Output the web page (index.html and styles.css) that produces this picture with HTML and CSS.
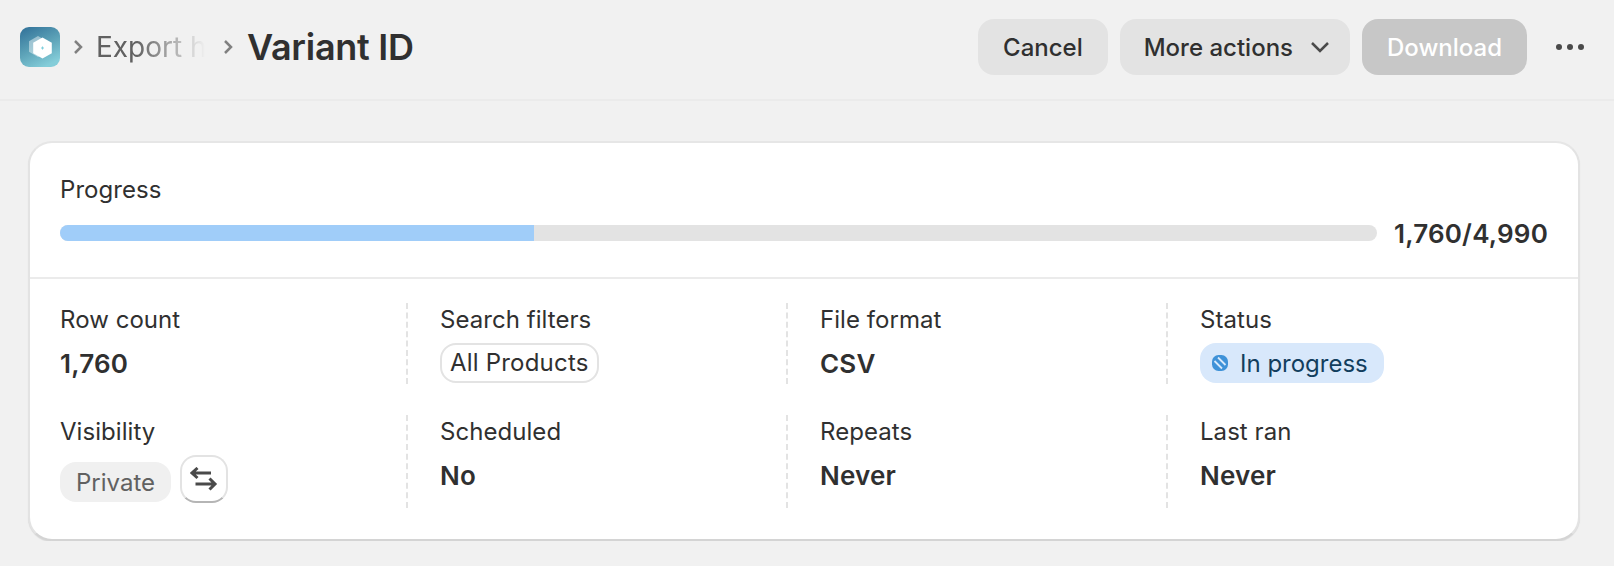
FILE: index.html
```html
<!DOCTYPE html>
<html lang="en">

<head>
    <meta charset="UTF-8">
    <title>Variant ID</title>
    <link rel="stylesheet" href="styles.css">
</head>

<body>
    <header class="topbar">
        <div class="crumbs">
            <svg class="logo" viewBox="0 0 40 40" width="40" height="40">
                <defs>
                    <linearGradient id="logo-bg" x1="0.1" y1="0" x2="0.6" y2="1">
                        <stop offset="0" stop-color="#33739a" />
                        <stop offset="0.55" stop-color="#5da3b8" />
                        <stop offset="1" stop-color="#84cdd9" />
                    </linearGradient>
                </defs>
                <rect width="40" height="40" rx="9" fill="url(#logo-bg)" />
                <path d="M18 9l9 5.200v10.600l-9 5.200-9-5.200V14.200z" fill="#fff" fill-opacity="0.45" />
                <path d="M22.500 10.500l9.300 5.300v10.400l-9.300 5.300-9.300-5.300V15.800z" fill="#fff" />
                <path d="M22.500 19.500v3M21 21h3" stroke="#7fcfdc" stroke-width="1" fill="none" />
            </svg>
            <svg class="crumb-sep" viewBox="0 0 10 16" width="10" height="16">
                <path d="M2 2l6 6-6 6" />
            </svg>
            <span class="crumb-link">Export h</span>
            <svg class="crumb-sep" viewBox="0 0 10 16" width="10" height="16">
                <path d="M2 2l6 6-6 6" />
            </svg>
            <h1>Variant ID</h1>
        </div>
        <div class="actions">
            <button class="btn">Cancel</button>
            <button class="btn btn-menu">More actions
                <svg viewBox="0 0 20 12" width="20" height="12">
                    <path d="M2 2l8 8 8-8" />
                </svg>
            </button>
            <button class="btn btn-disabled">Download</button>
            <div class="dots"><span></span><span></span><span></span></div>
        </div>
    </header>

    <main class="page">
        <section class="card">
            <div class="progress">
                <div class="label">Progress</div>
                <div class="progress-row">
                    <div class="track">
                        <div class="fill" style="width: 36%"></div>
                    </div>
                    <div class="count">1,760/4,990</div>
                </div>
            </div>
            <div class="stats">
                <div class="stat">
                    <div class="label">Row count</div>
                    <div class="value">1,760</div>
                </div>
                <div class="stat">
                    <div class="label">Search filters</div>
                    <div class="pill">All Products</div>
                </div>
                <div class="stat">
                    <div class="label">File format</div>
                    <div class="value">CSV</div>
                </div>
                <div class="stat">
                    <div class="label">Status</div>
                    <div class="badge badge-info">
                        <svg viewBox="0 0 16 16" width="16" height="16">
                            <rect width="16" height="16" rx="6.500" fill="#3f92d8" />
                            <path d="M2.500 6l7.500 7.500M6 2.500l7.500 7.500" stroke="#d8e9fb" stroke-width="1.800" fill="none" />
                        </svg>
                        In progress
                    </div>
                </div>
                <div class="stat">
                    <div class="label">Visibility</div>
                    <div class="visibility">
                        <div class="badge badge-plain">Private</div>
                        <button class="icon-btn">
                            <svg viewBox="0 0 28 24" width="28" height="24">
                                <path d="M2 6h19M7.500 1L2 6l5.500 5M5.500 17H25M19.500 11.500L25 17l-5.500 5.500" />
                            </svg>
                        </button>
                    </div>
                </div>
                <div class="stat">
                    <div class="label">Scheduled</div>
                    <div class="value">No</div>
                </div>
                <div class="stat">
                    <div class="label">Repeats</div>
                    <div class="value">Never</div>
                </div>
                <div class="stat">
                    <div class="label">Last ran</div>
                    <div class="value">Never</div>
                </div>
            </div>
        </section>
    </main>
</body>

</html>
```

FILE: styles.css
```css
body {
    margin: 0;
    background-color: #f1f1f1;
    overflow: hidden;
    font-family: "Inter", sans-serif;
    font-size: 24px;
    color: #303030;
}

.topbar {
    display: flex;
    justify-content: space-between;
    align-items: center;
    padding: 19px 30px 24px 20px;
    border-bottom: 2px solid #ebebeb;
}

.crumbs {
    display: flex;
    align-items: center;
}

.logo {
    display: block;
}

.crumb-sep {
    margin: 0 13px;
    flex: none;
}

.crumb-sep path {
    fill: none;
    stroke: #808080;
    stroke-width: 2.5;
}

.crumb-link {
    width: 114px;
    white-space: nowrap;
    font-size: 28px;
    color: #616161;
    -webkit-mask-image: linear-gradient(to right, #000 35%, transparent 96%);
    mask-image: linear-gradient(to right, #000 35%, transparent 96%);
}

h1 {
    margin: 0;
    margin-left: 1px;
    font-size: 36px;
    font-weight: 600;
    letter-spacing: -0.25px;
}

.actions {
    display: flex;
    align-items: center;
    gap: 12px;
}

.btn {
    display: flex;
    align-items: center;
    gap: 16px;
    height: 56px;
    padding: 0 25px;
    border: none;
    border-radius: 16px;
    background-color: #e3e3e3;
    font-family: inherit;
    font-size: 24px;
    font-weight: 500;
    color: #303030;
}

.btn svg path {
    fill: none;
    stroke: #4a4a4a;
    stroke-width: 2.5;
}

.btn-menu {
    gap: 17px;
    padding: 0 20px 0 24px;
}

.btn-disabled {
    background-color: #c7c7c7;
    color: #fff;
}

.dots {
    display: flex;
    gap: 5px;
    margin-left: 17px;
}

.dots span {
    width: 6px;
    height: 6px;
    border-radius: 50%;
    background-color: #4a4a4a;
}

.page {
    padding: 40px 34px 0 28px;
}

.card {
    background-color: #fff;
    border: 2px solid #e3e3e3;
    border-top-color: #e6e6e6;
    border-bottom-color: #d4d4d4;
    border-radius: 24px;
    box-shadow: 0 1px 1px rgba(0, 0, 0, 0.1);
}

.progress {
    padding: 30px 30px 27px;
    border-bottom: 2px solid #ebebeb;
}

.label {
    line-height: 34px;
    letter-spacing: 0.05px;
}

.progress-row {
    display: flex;
    align-items: center;
    gap: 17px;
    margin-top: 9px;
}

.track {
    flex: 1;
    height: 16px;
    border-radius: 8px;
    background-color: #e3e3e3;
    overflow: hidden;
}

.fill {
    height: 100%;
    background-color: #a0cdf9;
}

.count {
    padding-top: 2px;
    font-size: 26px;
    font-weight: 600;
    line-height: 32px;
    letter-spacing: 0.2px;
}

.stats {
    display: grid;
    grid-template-columns: 346px 380px 380px 1fr;
    row-gap: 31px;
    padding: 24px 30px 31px;
}

.stat {
    display: flex;
    flex-direction: column;
    gap: 6px;
    padding-left: 32px;
    border-left: 2px dashed #e3e3e3;
}

.stat:nth-child(4n + 1) {
    padding-left: 0;
    border-left: none;
}

.value {
    margin-top: 1px;
    font-size: 26px;
    font-weight: 600;
    line-height: 40px;
    letter-spacing: 0.2px;
}

.pill {
    align-self: flex-start;
    box-sizing: border-box;
    height: 40px;
    padding: 0 8px;
    border: 2px solid #e3e3e3;
    border-radius: 16px;
    line-height: 36px;
    letter-spacing: 0.2px;
}

.badge {
    display: flex;
    align-items: center;
    align-self: flex-start;
    height: 40px;
    padding: 0 16px;
    border-radius: 16px;
}

.badge-info {
    gap: 12px;
    padding: 0 16px 0 12px;
    background-color: #d8e8fb;
    color: #123e5e;
}

.badge-plain {
    margin-top: 7px;
    background-color: #f0f0f0;
    color: #616161;
}

.visibility {
    display: flex;
    align-items: flex-start;
    gap: 9px;
    padding-bottom: 5px;
}

.icon-btn {
    display: flex;
    justify-content: center;
    align-items: center;
    box-sizing: border-box;
    width: 48px;
    height: 48px;
    padding: 0;
    border: 2px solid #e3e3e3;
    border-bottom-color: #b5b5b5;
    border-radius: 16px;
    background-color: #fff;
}

.icon-btn path {
    fill: none;
    stroke: #4a4a4a;
    stroke-width: 3;
}
```
